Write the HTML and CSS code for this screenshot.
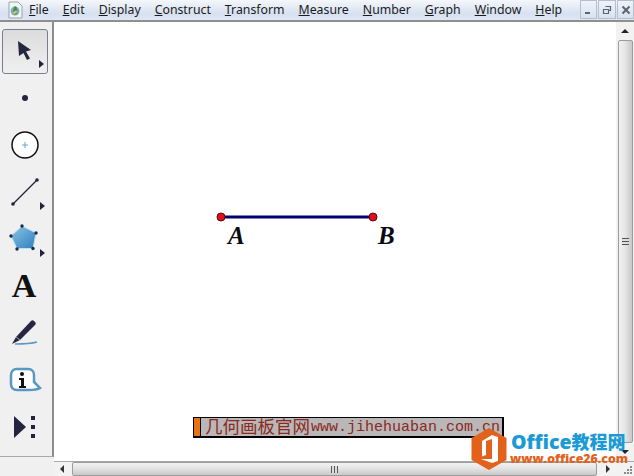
FILE: index.html
```html
<!DOCTYPE html>
<html lang="en">
<head>
  <meta charset="UTF-8">
  <meta name="viewport" content="width=device-width, initial-scale=1.0">
  <title>Sketchpad</title>
  <link rel="stylesheet" href="styles.css">
</head>
<body>
  <div class="window">
    <header class="menubar">
      <svg class="app-icon" width="16" height="18" viewBox="0 0 16 18">
        <path d="M2 1h9l4 4v12H2z" fill="#f4f6f4" stroke="#9aa4a8"/>
        <circle cx="8" cy="10" r="4.5" fill="#7fb2c8"/>
        <path d="M8 5c3 2 3 6 1 9-3-1-4-5-1-9z" fill="#3f8f5a"/>
        <path d="M6 12c1-2 3-3 4-2 0 2-2 4-4 2z" fill="#e8c24a"/>
      </svg>
      <nav class="menu">
        <a><u>F</u>ile</a>
        <a><u>E</u>dit</a>
        <a><u>D</u>isplay</a>
        <a><u>C</u>onstruct</a>
        <a><u>T</u>ransform</a>
        <a><u>M</u>easure</a>
        <a><u>N</u>umber</a>
        <a><u>G</u>raph</a>
        <a><u>W</u>indow</a>
        <a><u>H</u>elp</a>
      </nav>
      <div class="win-btns">
        <span class="win-btn">
          <svg width="9" height="9" viewBox="0 0 9 9"><path d="M1 7h5v2H1z" fill="#5b6470"/></svg>
        </span>
        <span class="win-btn">
          <svg width="10" height="10" viewBox="0 0 10 10"><path d="M3.5 1.500h5v4h-2M1.500 4.500h5v4h-5z" fill="none" stroke="#5b6470" stroke-width="1.200"/></svg>
        </span>
        <span class="win-btn">
          <svg width="10" height="10" viewBox="0 0 10 10"><path d="M1.500 1.500l7 7M8.500 1.500l-7 7" stroke="#5b6470" stroke-width="2"/></svg>
        </span>
      </div>
    </header>

    <div class="main">
      <aside class="toolbar">
        <div class="tool active">
          <svg width="20" height="22" viewBox="0 0 20 22"><path d="M3 0l13 9-5 1.500 4 7-3 1.500-3.500-7L4 15z" fill="#26263e"/></svg>
          <i class="more"></i>
        </div>
        <div class="tool">
          <svg width="8" height="8" viewBox="0 0 8 8"><circle cx="4" cy="4" r="3" fill="#23233a"/></svg>
        </div>
        <div class="tool">
          <svg width="30" height="30" viewBox="0 0 30 30">
            <circle cx="15" cy="15" r="13" fill="#fff" stroke="#111" stroke-width="1.500"/>
            <path d="M15 12v6M12 15h6" stroke="#6aa6cf" stroke-width="1"/>
          </svg>
        </div>
        <div class="tool">
          <svg width="30" height="30" viewBox="0 0 30 30">
            <path d="M3 27L27 3" stroke="#23233a" stroke-width="1.300"/>
            <circle cx="3" cy="27" r="1.800" fill="#23233a"/>
            <circle cx="27" cy="3" r="1.800" fill="#23233a"/>
          </svg>
          <i class="more"></i>
        </div>
        <div class="tool">
          <svg width="32" height="30" viewBox="0 0 32 30">
            <defs>
              <linearGradient id="poly" x1="0" y1="0" x2="1" y2="1">
                <stop offset="0" stop-color="#8cc4e6"/>
                <stop offset="1" stop-color="#2f7fbd"/>
              </linearGradient>
            </defs>
            <path d="M13 2l14 7-3 15.500H8L2 12z" fill="url(#poly)" stroke="#bfe0f2"/>
            <g fill="#1d2a44">
              <circle cx="13" cy="2" r="1.700"/>
              <circle cx="27" cy="9" r="1.700"/>
              <circle cx="24" cy="24.500" r="1.700"/>
              <circle cx="8" cy="25" r="1.700"/>
              <circle cx="2" cy="12" r="1.700"/>
            </g>
          </svg>
          <i class="more"></i>
        </div>
        <div class="tool"><span class="tool-a">A</span></div>
        <div class="tool">
          <svg width="28" height="28" viewBox="0 0 28 28">
            <path d="M1 25l4-7L20 2c1-1 2-1 3 0l1 1c1 1 1 2 0 3L9 21z" fill="#262640"/>
            <path d="M5 18l4 3" stroke="#9a9aa8"/>
            <path d="M4 25c7 0 15 0 22-2" fill="none" stroke="#5a98c4" stroke-width="1.500"/>
          </svg>
        </div>
        <div class="tool">
          <svg width="34" height="26" viewBox="0 0 34 26">
            <path d="M9 2h11c4 0 6 3 6 6v7l6 6c-3 2-8 2-11 2H9c-4 0-6-3-6-6V8c0-3 2-6 6-6z" fill="#fff" stroke="#5a98c4" stroke-width="2.500"/>
            <circle cx="14" cy="7" r="2" fill="#111"/>
            <path d="M11 11h5v8h2v2h-7v-2h2v-6h-2z" fill="#111"/>
          </svg>
        </div>
        <div class="tool">
          <svg width="24" height="24" viewBox="0 0 24 24">
            <path d="M1 1l12 11L1 23z" fill="#23233f"/>
            <path d="M18 1h4v4h-4zM18 10h4v4h-4zM18 19h4v4h-4z" fill="#23233f"/>
          </svg>
        </div>
      </aside>

      <div class="work">
        <div class="work-top">
          <main class="canvas">
            <svg class="sketch" width="562" height="439" viewBox="0 0 562 439">
              <line x1="167" y1="195" x2="319" y2="195" stroke="#00006e" stroke-width="3"/>
              <circle cx="167" cy="195" r="4" fill="#e0101a" stroke="#5c0a10"/>
              <circle cx="319" cy="195" r="4" fill="#e0101a" stroke="#5c0a10"/>
            </svg>
            <span class="pt-label label-a">A</span>
            <span class="pt-label label-b">B</span>
            <div class="link-label"><span class="link-tab"></span><span class="link-text"><span class="zh">几何画板官网</span><span class="url">www.jihehuaban.com.cn</span></span></div>
          </main>
          <div class="vscroll">
            <span class="arrow-btn"><i class="tri-up"></i></span>
            <div class="vthumb"><span class="grip-h"></span></div>
            <span class="arrow-btn"><i class="tri-down"></i></span>
          </div>
        </div>
        <div class="hscroll">
          <span class="arrow-btn h"><i class="tri-left"></i></span>
          <div class="hthumb"><span class="grip-v"></span></div>
          <span class="arrow-btn h"><i class="tri-right"></i></span>
          <span class="corner">
            <svg width="10" height="10" viewBox="0 0 10 10" fill="#8a8a8a">
              <path d="M7 1h2v2H7zM4 4h2v2H4zM7 4h2v2H7zM1 7h2v2H1zM4 7h2v2H4zM7 7h2v2H7z"/>
            </svg>
          </span>
        </div>
      </div>
    </div>

    <div class="watermark">
      <svg width="36" height="42" viewBox="0 0 36 42">
        <path d="M18 0l17.500 10v22L18 42 .5 32V10z" fill="#e2621b"/>
        <path d="M21 7l6 2v24l-6 2-11-4h11V11l-6 2v14l-4 1.500V13z" fill="#fff"/>
      </svg>
      <div class="wm-text">
        <div class="wm-title">Office<span class="wm-zh">教程网</span></div>
        <div class="wm-url">www.office26.com</div>
      </div>
    </div>
  </div>
</body>
</html>
```

FILE: styles.css
```css
* {
  box-sizing: border-box;
}
html, body {
  margin: 0;
  overflow: hidden;
}
.window {
  position: relative;
  width: 634px;
  height: 476px;
  display: flex;
  flex-direction: column;
  background: #f0f0f0;
  font-family: "Noto Sans", sans-serif;
}
.menubar {
  height: 22px;
  display: flex;
  align-items: flex-start;
  padding-left: 7px;
  background: linear-gradient(#f4f7fb, #d6e0f0 70%, #dfe7f3);
  border-bottom: 2px solid #8f8f8f;
}
.app-icon {
  margin-top: 1px;
}
.menu {
  display: flex;
  gap: 14px;
  margin-left: 6px;
  font-size: 12.3px;
  line-height: 19px;
  color: #1b1b1b;
}
.win-btns {
  display: flex;
  gap: 1px;
  margin-left: auto;
}
.win-btn {
  width: 17px;
  height: 19px;
  display: flex;
  align-items: center;
  justify-content: center;
  background: linear-gradient(#eef3fa, #d7e1f0);
  border: 1px solid #b3bfd0;
}
.win-btn:nth-child(2) {
  width: 18px;
}
.main {
  flex: 1;
  display: flex;
  min-height: 0;
}
.toolbar {
  width: 54px;
  height: 435px;
  padding-top: 7px;
  background: #f0f0f0;
  border-right: 2px solid #8c8c8c;
  border-bottom: 1px solid #a8a8a8;
}
.tool {
  position: relative;
  width: 46px;
  height: 47px;
  margin-left: 2px;
  display: flex;
  align-items: center;
  justify-content: center;
}
.tool.active {
  height: 45px;
  background: linear-gradient(#dcdcdc, #f0f0f0);
  border: 1px solid #77808a;
  border-radius: 3px;
}
.more {
  position: absolute;
  right: 3px;
  bottom: 5px;
  border-left: 5px solid #23233a;
  border-top: 4px solid transparent;
  border-bottom: 4px solid transparent;
}
.tool-a {
  margin-right: 2px;
  font-family: "Liberation Serif", serif;
  font-weight: bold;
  font-size: 34px;
  line-height: 1;
  color: #111;
}
.work {
  flex: 1;
  display: flex;
  flex-direction: column;
  min-width: 0;
}
.work-top {
  flex: 1;
  display: flex;
  min-height: 0;
}
.canvas {
  position: relative;
  flex: 1;
  background: #fff;
}
.sketch {
  position: absolute;
  left: 0;
  top: 0;
}
.pt-label {
  position: absolute;
  font-family: "Liberation Serif", serif;
  font-style: italic;
  font-weight: bold;
  font-size: 25px;
  line-height: 24px;
  color: #0a0a14;
}
.label-a {
  left: 174px;
  top: 202px;
}
.label-b {
  left: 324px;
  top: 202px;
}
.link-label {
  position: absolute;
  left: 139px;
  top: 395px;
  width: 311px;
  height: 21px;
  display: flex;
  background: #000;
  padding: 1px 2px 2px 1px;
}
.link-tab {
  width: 6px;
  background: #e8740f;
  margin-right: 1px;
}
.link-text {
  flex: 1;
  display: flex;
  align-items: center;
  background: #b9b7b7;
  color: #8b2a22;
  font-family: "Liberation Mono", monospace;
  font-size: 15px;
  line-height: 18px;
  white-space: nowrap;
}
.zh {
  font-family: "Noto Sans CJK SC", sans-serif;
  font-size: 17.5px;
  margin-left: 4px;
  margin-top: -2px;
}
.url {
  margin-left: 1px;
  margin-top: 2px;
}
.vscroll {
  width: 18px;
  display: flex;
  flex-direction: column;
  background: #f2f2f2;
  padding-right: 1px;
}
.arrow-btn {
  height: 18px;
  flex: none;
  display: flex;
  align-items: center;
  justify-content: center;
}
.arrow-btn.h {
  width: 18px;
  height: 100%;
}
.vthumb {
  flex: 1;
  display: flex;
  align-items: center;
  justify-content: center;
  margin-left: 2px;
  background: linear-gradient(90deg, #f2f2f2, #e6e6e6 45%, #c8c8c8);
  border: 1px solid #9c9c9c;
  border-radius: 2px;
}
.grip-h {
  width: 7px;
  height: 7px;
  background: repeating-linear-gradient(#555 0 1px, #ddd 1px 3px);
}
.tri-up, .tri-down, .tri-left, .tri-right {
  width: 0;
  height: 0;
  border: 4px solid transparent;
}
.tri-up {
  border-top: 0;
  border-bottom-color: #222;
}
.tri-down {
  border-bottom: 0;
  border-top-color: #222;
}
.tri-left {
  margin-right: 2px;
  border-left: 0;
  border-right-color: #333;
}
.tri-right {
  margin-left: 3px;
  border-right: 0;
  border-left-color: #333;
}
.hscroll {
  height: 15px;
  display: flex;
  align-items: stretch;
  background: #f2f2f2;
  border-top: 1px solid #a8a8a8;
}
.hthumb {
  flex: 1;
  display: flex;
  align-items: center;
  justify-content: center;
  background: linear-gradient(#f2f2f2, #e4e4e4 45%, #c8c8c8);
  border: 1px solid #9c9c9c;
  border-radius: 2px;
}
.grip-v {
  width: 7px;
  height: 7px;
  background: repeating-linear-gradient(90deg, #555 0 1px, #ddd 1px 3px);
}
.corner {
  width: 19px;
  flex: none;
  display: flex;
  align-items: flex-end;
  justify-content: flex-end;
  padding: 0 1px 1px 0;
}
.watermark {
  position: absolute;
  left: 471px;
  top: 428px;
  display: flex;
  align-items: flex-start;
  gap: 2px;
}
.wm-text {
  padding-top: 4px;
  font-family: "Open Sans", "Noto Sans CJK SC", sans-serif;
  font-weight: 800;
}
.wm-title {
  margin-left: 2px;
  font-size: 19.5px;
  line-height: 20px;
  color: #1b9ad6;
  white-space: nowrap;
}
.wm-zh {
  font-size: 18px;
}
.wm-url {
  margin-left: 1px;
  font-size: 12.3px;
  line-height: 14px;
  color: #e2621b;
  white-space: nowrap;
}
```
